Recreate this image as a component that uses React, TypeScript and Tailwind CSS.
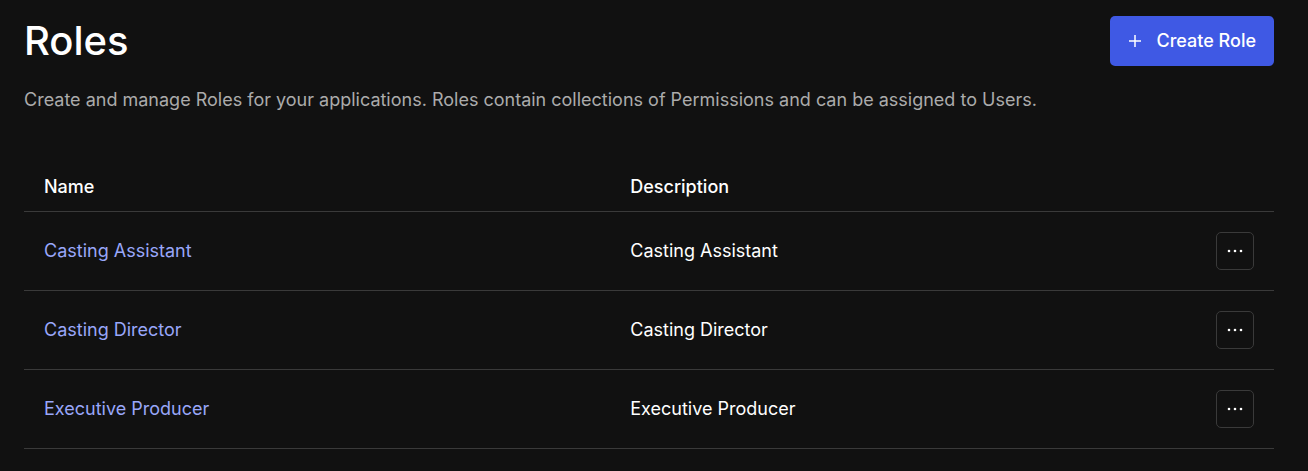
const roles = ["Casting Assistant", "Casting Director", "Executive Producer"];

export default function App() {
  return (
    <main className="min-h-screen bg-[#111111] pt-4 pr-[34px] pl-6 font-['Inter',sans-serif] text-lg text-white">
      <header className="flex items-start justify-between">
        <h1 className="text-[40px] leading-[50px] font-medium">Roles</h1>
        <button type="button" className="flex h-[50px] items-center gap-[14px] rounded-[5px] bg-[#3f59e4] px-[18px] font-medium">
          <svg width="14" height="14" viewBox="0 0 14 14" fill="none" stroke="currentColor" strokeWidth="1.5" aria-hidden="true">
            <path d="M7 1v12M1 7h12" />
          </svg>
          Create Role
        </button>
      </header>
      <p className="mt-5 leading-7 text-[#ababab]">
        Create and manage Roles for your applications. Roles contain collections of Permissions and can be assigned to Users.
      </p>
      <table className="mt-[50px] w-full table-fixed border-collapse text-left">
        <thead>
          <tr className="h-[47px] border-b border-[#3a3a3a]">
            <th className="w-[46.9%] px-5 font-medium">Name</th>
            <th className="px-5 font-medium">Description</th>
            <th className="w-20" aria-label="Actions" />
          </tr>
        </thead>
        <tbody>
          {roles.map((role) => (
            <tr key={role} className="h-[79px] border-b border-[#3a3a3a]">
              <td className="px-5"><a href="#" className="text-[#99a7f9]">{role}</a></td>
              <td className="px-5">{role}</td>
              <td className="pr-5">
                <button type="button" aria-label={`Actions for ${role}`} className="ml-auto flex size-[38px] items-center justify-center rounded-[5px] border border-[#3a3a3a]">
                  <svg width="18" height="4" viewBox="0 0 18 4" fill="currentColor" aria-hidden="true">
                    <circle cx="3" cy="2" r="1.3" /><circle cx="9" cy="2" r="1.3" /><circle cx="15" cy="2" r="1.3" />
                  </svg>
                </button>
              </td>
            </tr>
          ))}
        </tbody>
      </table>
    </main>
  );
}
